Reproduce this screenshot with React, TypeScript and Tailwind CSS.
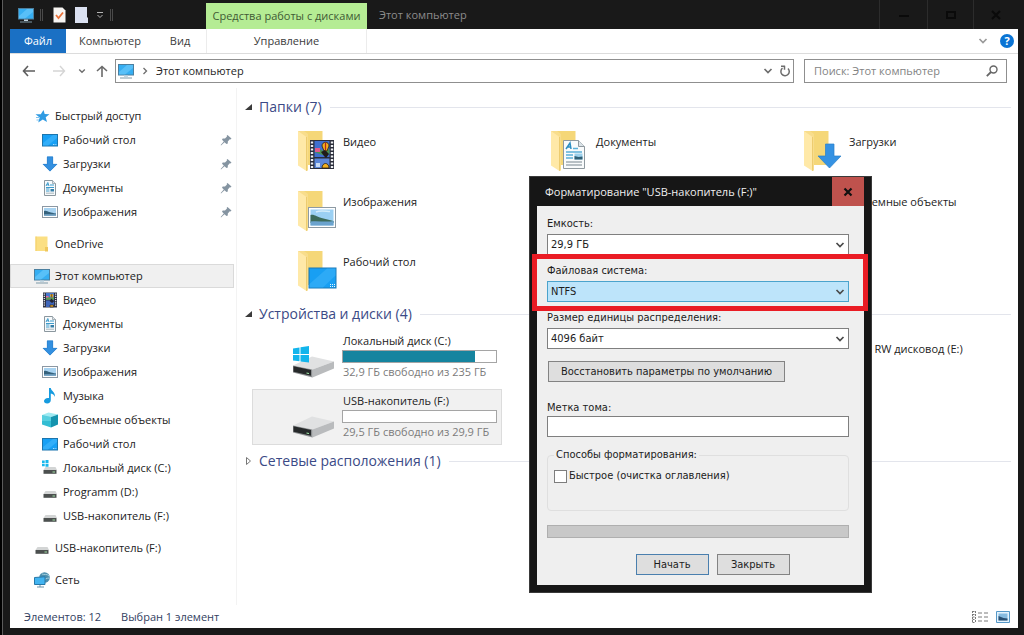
import { useState } from 'react'
import type { ReactNode } from 'react'
import clsx from 'clsx'

interface IconProps {
  className?: string
}

function MonitorIcon({ className = 'w-4 h-4' }: IconProps) {
  return (
    <svg viewBox="0 0 16 16" className={className}>
      <rect x="0.5" y="1.5" width="15" height="10.5" fill="#35aef2" stroke="#4b7f9f" />
      <path d="M1 9L9 2h6v3L7 11.500H1z" fill="#6fcbfb" opacity="0.6" />
      <path d="M6 12.500h4v1.500H6z" fill="#c3d7e2" />
      <path d="M2 15h12" stroke="#7d99a8" />
    </svg>
  )
}

function StarIcon() {
  return (
    <svg viewBox="0 0 16 16" className="w-4 h-4">
      <path d="M9.500 2l1.200 4 4.800.3-3.800 3 1.300 4.700-4.200-2.400-4.600 2.900 1.500-4.900L1.500 6.300h5.300z" fill="#2f9be3" />
      <path d="M2 9.500H5M2.500 12H5" stroke="#7cc3f0" />
    </svg>
  )
}

function DesktopIcon({ className = 'w-4 h-4' }: IconProps) {
  return (
    <svg viewBox="0 0 16 16" className={className}>
      <rect x="0.5" y="2.500" width="15" height="11.500" fill="#17a0f5" stroke="#1c75ad" />
      <path d="M1 11L11 3h4v3L6 13.500H1z" fill="#45b8fb" opacity="0.6" />
      <path d="M11 12.500h3.500" stroke="#a9dafa" strokeDasharray="1 .6" />
    </svg>
  )
}

function DownloadIcon({ className = 'w-4 h-4' }: IconProps) {
  return (
    <svg viewBox="0 0 16 16" className={className}>
      <path d="M5 .5h6v7.500h4.500L8 15.500.500 8H5z" fill="#3390e0" />
      <path d="M5.300 1h5.400v7.300h4L8 15 1.300 8.300h4z" fill="none" stroke="#2c7fc9" strokeWidth=".6" />
    </svg>
  )
}

function DocumentIcon({ className = 'w-4 h-4' }: IconProps) {
  return (
    <svg viewBox="0 0 16 16" className={className}>
      <path d="M2.500.5h8l3 3v12h-11z" fill="#f7fafc" stroke="#8b979e" />
      <path d="M10.500.5v3h3" fill="#dfe6ea" stroke="#8b979e" strokeWidth=".7" />
      <path d="M4 6l1.800-3.500L7 6M4.500 4.800h2.200M8 5h4M4 7.500h8M4 9h3.500M4 11h3.500" stroke="#3d9bcb" fill="none" />
      <path d="M4 13.200h8" stroke="#a9b5bb" />
      <path d="M8.500 9h3.500v2.500H8.500z" fill="#357fa8" />
    </svg>
  )
}

function PictureIcon({ className = 'w-4 h-4' }: IconProps) {
  return (
    <svg viewBox="0 0 16 16" className={className}>
      <rect x="0.5" y="2.500" width="15" height="11" fill="#fff" stroke="#8c98a3" />
      <rect x="2" y="4" width="12" height="8" fill="#a8d3f1" />
      <path d="M2 7c2-1 3.500.3 5.500 1S11 9 14 9.500V12H2z" fill="#35627d" />
      <path d="M2 10.500c4-.6 8 .2 12-.3V12H2z" fill="#78a7c8" />
    </svg>
  )
}

function FolderSmallIcon() {
  return (
    <svg viewBox="0 0 16 16" className="w-4 h-4">
      <path d="M1.500.500h12V15h-12z" fill="#fbdf83" />
      <path d="M11 11h3v4.500h-3z" fill="#efc75c" />
      <path d="M2 .500V15" stroke="#f3cf68" />
    </svg>
  )
}

function VideoIcon({ className = 'w-4 h-4' }: IconProps) {
  return (
    <svg viewBox="0 0 16 16" className={className}>
      <path d="M1 .500h14v15H1z" fill="#2d3143" />
      <path d="M2.300 1.500v13M13.700 1.500v13" stroke="#e4e7ed" strokeWidth="1.300" strokeDasharray="1.200 1" />
      <path d="M4 1h8v6.700H4z" fill="#4778cf" />
      <path d="M4 8.500h8V15H4z" fill="#3f66ba" />
      <path d="M4 6l2-1.500L9 6l3-1v2.700H4z" fill="#5f9c50" />
      <path d="M4 4h2.500v1.500H4z" fill="#e0669c" />
      <path d="M8 3.500C8 1.500 11.500 1.500 11.500 3.500L10.500 5.500h-1.500z" fill="#edab24" />
      <path d="M9.700 2v3.500M8 13h3.500v2H8z" stroke="#1e1a18" strokeWidth=".6" fill="#edab24" />
      <path d="M7.500 9l2-2.500L12 9.500 10 11z" fill="#222333" />
    </svg>
  )
}

function MusicIcon() {
  return (
    <svg viewBox="0 0 16 16" className="w-4 h-4">
      <path d="M7 0h1.800c.2 3 4.700 4 4.200 9-.6-2-1.900-3-4.200-3.500V12c0 2-1.500 3.500-3.600 3.500C3 15.500 2 14.500 2 13c0-2 2.300-3.500 5-3z" fill="#169bdf" />
    </svg>
  )
}

function CubeIcon() {
  return (
    <svg viewBox="0 0 16 16" className="w-4 h-4">
      <path d="M0 3l6.500-2.500L16 2.500 9 5z" fill="#9feaf2" />
      <path d="M0 3l9 2v10.500L0 12.500z" fill="#33bdd3" />
      <path d="M9 5l7-2.500v10L9 15.500z" fill="#1493ae" />
      <path d="M0 3l9 2v4L0 9z" fill="#66d7e4" opacity=".7" />
    </svg>
  )
}

function DriveSmallIcon({ system = false }: { system?: boolean }) {
  return (
    <svg viewBox="0 0 16 16" className="w-4 h-4">
      {system && <path d="M0 .500h2.700v2.500H0zM3.500 0h3v3h-3zM0 3.800h2.700v2.500H0zM3.500 3.800h3v3h-3z" fill="#16b7ec" />}
      <path d="M3.500 7h10l1.500 3H1.500z" fill="#d3d5d5" />
      <path d="M1.500 10H14.500v3.800H1.500z" fill="#4c504f" />
      <path d="M10.500 12h2.500" stroke="#9fe0a5" />
    </svg>
  )
}

function NetworkIcon() {
  return (
    <svg viewBox="0 0 16 16" className="w-4 h-4">
      <circle cx="10.500" cy="5.500" r="5.300" fill="#4d8fae" />
      <path d="M8 2c2 1 5-.5 7 2M9 10c1-3 4-4 6.500-4" stroke="#a4cfdd" fill="none" />
      <path d="M.5 5.500l10.500-.7v7.700H.500z" fill="#42b4f1" stroke="#2778a8" />
      <path d="M3 15h7M6 13v2" stroke="#6c93a9" />
    </svg>
  )
}

function PinIcon() {
  return (
    <svg viewBox="0 0 12 12" className="w-3 h-3">
      <path d="M7.500 1L11.500 4.500 10.500 5.500 9.800 5.300 7.800 7.500 7.800 9.500 6.500 10 4.500 8.200 1 11.500 .7 11 3.800 7.500 2 5.700 2.700 4.500 5 4.500 7 2.500 6.700 1.700z" fill="#8594a1" />
    </svg>
  )
}

function FolderBase() {
  return (
    <>
      <path d="M8 1h18.500v34H8z" fill="#f5d778" />
      <path d="M2 1h6l4 3v37l-6-5-4-1z" fill="#f8dd8c" />
      <path d="M2 1l8.500 6v34L2 35.500z" fill="#ffe9a8" />
      <path d="M10.500 7v34" stroke="#e9c766" strokeWidth=".8" />
    </>
  )
}

function FolderIcon({ children }: { children?: ReactNode }) {
  return (
    <svg viewBox="0 0 42 42" className="w-[42px] h-[42px]">
      <FolderBase />
      {children}
    </svg>
  )
}

function VideoFolder() {
  return (
    <FolderIcon>
      <rect x="14" y="10" width="24" height="29" fill="#2a2d3a" />
      <path d="M16 11.500v27M36 11.500v27" stroke="#eef0f3" strokeWidth="2.400" strokeDasharray="2 1.500" />
      <path d="M18.500 11h15v16h-15z" fill="#3f6fcf" />
      <path d="M18.500 28.500h15V38h-15z" fill="#5b86d8" />
      <path d="M18.500 22l5-3 4 2 6-2v5l-7 1z" fill="#4b9150" />
      <path d="M19 18h5v4h-5z" fill="#df5a8d" />
      <path d="M26 16c0-5 7-5 7 0l-2 5h-3z" fill="#f2b01f" stroke="#2b1d0e" strokeWidth=".8" />
      <path d="M29.500 12.500v8" stroke="#b3271d" strokeWidth="1.200" />
      <path d="M25 22l4-2 4 4-3 4-2-2z" fill="#1f1c1a" />
      <path d="M26 38c0-6 7-6 7 0z" fill="#f2b01f" stroke="#2b1d0e" strokeWidth=".8" />
      <path d="M20 33h4v4h-4z" fill="#c7daf5" />
    </FolderIcon>
  )
}

function PictureFolder() {
  return (
    <FolderIcon>
      <rect x="12.500" y="17.500" width="27" height="20" fill="#fff" stroke="#8d9aa3" />
      <rect x="14.500" y="19.500" width="23" height="16" fill="#9bd0f3" />
      <path d="M14.500 25c4-1 6 2 11 3l12 3v2h-23z" fill="#3c6b5a" />
      <path d="M14.500 31.500c8-1 15 1 23-.5v4.500h-23z" fill="#6ba3ce" />
      <path d="M20 22c4-2 8-1 14-.5" stroke="#d5edfb" strokeWidth="1.500" fill="none" />
    </FolderIcon>
  )
}

function DesktopFolder() {
  return (
    <FolderIcon>
      <rect x="13" y="18" width="27" height="20" fill="#189ff3" stroke="#1b79b5" />
      <path d="M13.500 34L31 18.500h8.500v7L27 37.500H13.500z" fill="#42b6fa" opacity=".5" />
      <path d="M34 36.500h5M34 34.500h5" stroke="#e6f6ff" strokeDasharray="1 1" />
    </FolderIcon>
  )
}

function DocumentFolder() {
  return (
    <FolderIcon>
      <path d="M14.500 10.500h15l6 6v22h-21z" fill="#f9fbfc" stroke="#8f999f" />
      <path d="M29.500 10.500v6h6" fill="#dbe3e8" stroke="#8f999f" />
      <path d="M17 19l4-6 1 6M18.500 17h3.500" stroke="#2d8ec2" strokeWidth="1.500" fill="none" />
      <path d="M24 18.500h5M17 22h16M17 25h7M17 28h7" stroke="#5bb0d8" strokeWidth="1.300" />
      <path d="M17 32h16M17 35h16" stroke="#a3adb3" strokeWidth="1.300" />
      <path d="M25.500 23.500h8v6h-8z" fill="#9cd0ec" />
      <path d="M25.500 26l4 1 4-.5v3h-8z" fill="#2f6076" />
    </FolderIcon>
  )
}

function DownloadFolder() {
  return (
    <FolderIcon>
      <path d="M23.500 14h8.500v12h7L27.500 38 16 26h7.500z" fill="#3592e3" stroke="#2a7fc9" strokeWidth=".7" />
    </FolderIcon>
  )
}

function DriveIcon({ system = false }: { system?: boolean }) {
  return (
    <svg viewBox="0 0 44 34" className="w-[44px] h-[34px]">
      <path d="M1 20.500L20 11.500l22 5-21.500 8z" fill="#e0e1e2" />
      <path d="M20.500 24.500L42 16.500v7L20.500 32.500z" fill="#b9bbbd" />
      <path d="M1 20.500l19.500 4v8L1 27.500z" fill="#8c8f91" />
      <path d="M1.500 21.300l17.500 3.800v5.700L1.500 26.800z" fill="#26292a" />
      <path d="M14.500 27.500l2.500.5v1l-2.500-.5z" fill="#a6f3ae" />
      {system && <path d="M1 3.500l6.500-1V9H1zM8.500 2.300L17 1v8H8.500zM1 10h6.500v6.300L1 15.500zM8.500 10H17v7.500l-8.500-1z" fill="#13b5ec" />}
    </svg>
  )
}

function Chevron({ className }: IconProps) {
  return (
    <svg viewBox="0 0 10 10" className={className} fill="none" stroke="currentColor">
      <path d="M1.500 3L5 6.500 8.500 3" strokeWidth="1.700" />
    </svg>
  )
}

interface TreeItem {
  label: string
  icon: ReactNode
  nested?: boolean
  pinned?: boolean
  selected?: boolean
}

const TREE: TreeItem[][] = [
  [
    { label: 'Быстрый доступ', icon: <StarIcon /> },
    { label: 'Рабочий стол', icon: <DesktopIcon />, nested: true, pinned: true },
    { label: 'Загрузки', icon: <DownloadIcon />, nested: true, pinned: true },
    { label: 'Документы', icon: <DocumentIcon />, nested: true, pinned: true },
    { label: 'Изображения', icon: <PictureIcon />, nested: true, pinned: true },
  ],
  [{ label: 'OneDrive', icon: <FolderSmallIcon /> }],
  [
    { label: 'Этот компьютер', icon: <MonitorIcon />, selected: true },
    { label: 'Видео', icon: <VideoIcon />, nested: true },
    { label: 'Документы', icon: <DocumentIcon />, nested: true },
    { label: 'Загрузки', icon: <DownloadIcon />, nested: true },
    { label: 'Изображения', icon: <PictureIcon />, nested: true },
    { label: 'Музыка', icon: <MusicIcon />, nested: true },
    { label: 'Объемные объекты', icon: <CubeIcon />, nested: true },
    { label: 'Рабочий стол', icon: <DesktopIcon />, nested: true },
    { label: 'Локальный диск (C:)', icon: <DriveSmallIcon system />, nested: true },
    { label: 'Programm (D:)', icon: <DriveSmallIcon />, nested: true },
    { label: 'USB-накопитель (F:)', icon: <DriveSmallIcon />, nested: true },
  ],
  [{ label: 'USB-накопитель (F:)', icon: <DriveSmallIcon /> }],
  [{ label: 'Сеть', icon: <NetworkIcon /> }],
]

function TitleBar() {
  return (
    <header className="flex h-[29px] text-[#8c8c8c]">
      <div className="flex w-[196px] items-center pl-2">
        <MonitorIcon />
        <span className="ml-1.5 h-3 w-[3px] border-x border-[#4a4a4a]" />
        <svg viewBox="0 0 13 16" className="ml-2.5 h-4 w-[13px]">
          <path d="M.5.500h9l3 3v12H.500z" fill="#f7f5f3" />
          <path d="M3 8l2.500 3L10 5.500" fill="none" stroke="#e8713a" strokeWidth="1.800" />
        </svg>
        <svg viewBox="0 0 13 16" className="ml-[9px] h-4 w-[13px]">
          <path d="M0 0h12v10l1 1v5H0z" fill="#dbe1f1" />
        </svg>
        <svg viewBox="0 0 8 8" className="ml-2 h-2 w-2" fill="none" stroke="#b5b5b5">
          <path d="M1 1.500h6M1.500 4L4 6.500 6.500 4" />
        </svg>
        <span className="ml-1.5 h-3 w-[3px] border-x border-[#4a4a4a]" />
      </div>
      <div className="mt-[3px] flex w-[161px] items-center justify-center bg-[#b5ec94] whitespace-nowrap text-[#3f5a35]">
        Средства работы с дисками
      </div>
      <h1 className="ml-3 self-center">Этот компьютер</h1>
      <div className="ml-auto flex text-[#0a0a0a]">
        <button aria-label="Свернуть" className="flex w-12 items-center justify-center border-l border-[#2c2c2c]">
          <svg viewBox="0 0 12 12" className="h-3 w-3"><path d="M1 7h10" stroke="currentColor" strokeWidth="2" /></svg>
        </button>
        <button aria-label="Развернуть" className="flex w-[46px] items-center justify-center border-l border-[#2c2c2c]">
          <svg viewBox="0 0 12 12" className="h-3 w-3"><path d="M2 3h8v6H2z" stroke="currentColor" strokeWidth="2" fill="none" /></svg>
        </button>
        <button aria-label="Закрыть окно" className="flex w-[45px] items-center justify-center border-l border-[#2c2c2c]">
          <svg viewBox="0 0 12 12" className="h-3 w-3"><path d="M2 2l8 8M10 2l-8 8" stroke="currentColor" strokeWidth="2" /></svg>
        </button>
      </div>
    </header>
  )
}

function RibbonTabs() {
  return (
    <nav className="flex h-[25px] border-b border-[#dcdcdc] bg-white text-[#3c3c3c]">
      <button className="w-14 bg-[#1a70c4] text-white">Файл</button>
      <button className="w-[88px]">Компьютер</button>
      <button className="w-[52px]">Вид</button>
      <button className="w-[161px] border-x border-[#ececec]">Управление</button>
      <div className="ml-auto flex items-center gap-3 pr-1 text-[#9a9a9a]">
        <Chevron className="h-2.5 w-2.5" />
        <button aria-label="Справка" className="h-3.5 w-3.5 rounded-full bg-[#0a74d4] leading-[14px] font-bold text-white">?</button>
      </div>
    </nav>
  )
}

function AddressRow() {
  return (
    <div className="flex h-[34px] items-center bg-white pr-[11px] text-[#6d6d6d]">
      <div className="flex w-[105px] items-center pl-3">
        <button aria-label="Назад">
          <svg viewBox="0 0 14 12" className="h-3 w-3.5" fill="none" stroke="#5e5e5e" strokeWidth="1.600"><path d="M6 1L1.500 6 6 11M1.500 6H13" /></svg>
        </button>
        <button aria-label="Вперед" className="ml-4">
          <svg viewBox="0 0 14 12" className="h-3 w-3.5" fill="none" stroke="#d5d5d5" strokeWidth="1.400"><path d="M8 1l4.500 5L8 11M12.500 6H1" /></svg>
        </button>
        <button aria-label="Последние расположения" className="ml-3">
          <Chevron className="h-2 w-2" />
        </button>
        <button aria-label="Вверх" className="ml-2.5">
          <svg viewBox="0 0 12 12" className="h-3 w-3" fill="none" stroke="#6a6a6a" strokeWidth="1.600"><path d="M1 6l5-4.500L11 6M6 1.500V12" /></svg>
        </button>
      </div>
      <div className="flex h-6 flex-1 items-center border border-[#8f8f8f] px-0.5">
        <MonitorIcon />
        <svg viewBox="0 0 6 8" className="ml-2 h-2 w-1.5" fill="none" stroke="#6d6d6d" strokeWidth="1.300"><path d="M1.500 1l3 3-3 3" /></svg>
        <span className="ml-2 text-[#262626]">Этот компьютер</span>
        <button aria-label="Показать журнал" className="ml-auto">
          <Chevron className="h-2.5 w-2.5" />
        </button>
        <button aria-label="Обновить" className="ml-1.5">
          <svg viewBox="0 0 12 12" className="h-3 w-3" fill="none" stroke="currentColor" strokeWidth="1.500">
            <path d="M3.500 3.200A4.200 4.200 0 1 0 9 3.500M2 1.300h4M5.500 .8v4" />
          </svg>
        </button>
      </div>
      <form className="ml-2.5 flex h-6 w-[203px] items-center border border-[#8f8f8f] pr-2 pl-[9px]">
        <input aria-label="Поиск" placeholder="Поиск: Этот компьютер" className="min-w-0 flex-1 outline-none placeholder:text-[#838383]" />
        <svg viewBox="0 0 12 12" className="h-3 w-3" fill="none" stroke="#666" strokeWidth="1.400">
          <circle cx="7.500" cy="4.500" r="3.500" />
          <path d="M5 7L.8 11.200" strokeWidth="1.800" />
        </svg>
      </form>
    </div>
  )
}

function Sidebar() {
  return (
    <aside className="flex w-[227px] flex-col gap-2 border-r border-[#f3f3f3] pt-4 pr-0.5">
      {TREE.map((group, i) => (
        <ul key={i}>
          {group.map((item) => (
            <li key={item.label}>
              <a
                href="#"
                className={clsx(
                  'flex h-6 items-center gap-[5px] border pr-px',
                  item.nested ? 'pl-[31px]' : 'pl-[23px]',
                  item.selected ? 'border-[#dadada] bg-[#f0f0f0]' : 'border-transparent'
                )}
              >
                {item.icon}
                <span className="flex-1">{item.label}</span>
                {item.pinned && <PinIcon />}
              </a>
            </li>
          ))}
        </ul>
      ))}
    </aside>
  )
}

function SectionHeading({ open = true, children }: { open?: boolean; children: ReactNode }) {
  return (
    <h2 className="-ml-2 flex h-[18px] items-center text-[14px] leading-4 text-[#3b4a86]">
      <svg viewBox="0 0 8 8" className="mr-[7px] h-2 w-2">
        {open ? <path d="M8 1v6H1z" fill="#3b3b3b" /> : <path d="M2.500 .5L6.500 4l-4 3.500z" fill="none" stroke="#777" />}
      </svg>
      {children}
      <span className="ml-2 h-px flex-1 bg-[#e3e5ec]" />
    </h2>
  )
}

function TileGrid({ children }: { children: ReactNode }) {
  return <div className="mt-1.5 mr-[3px] mb-[7px] grid grid-cols-3 gap-x-[3px] gap-y-1">{children}</div>
}

function FolderTile({ icon, label }: { icon: ReactNode; label: string }) {
  return (
    <div className="flex h-14 pl-11">
      <div className="mt-2 w-[47px]">{icon}</div>
      <span className="mt-3">{label}</span>
    </div>
  )
}

interface DriveTileProps {
  label: string
  info: string
  used: number
  system?: boolean
  selected?: boolean
}

function DriveTile({ label, info, used, system, selected }: DriveTileProps) {
  return (
    <div className={clsx('flex h-14 border pl-[39px]', selected ? 'border-[#dcdcdc] bg-[#f1f1f1]' : 'border-transparent')}>
      <div className="mt-[15px] w-[51px]"><DriveIcon system={system} /></div>
      <div className="whitespace-nowrap">
        <div className="mt-[3px]">{label}</div>
        <div className="-ml-px mt-px h-[13px] w-[155px] border border-[#a5a5a5] bg-white">
          <div className="h-full bg-[#15849f]" style={{ width: `${used}%` }} />
        </div>
        <div className="mt-px text-[#7b7b7b]">{info}</div>
      </div>
    </div>
  )
}

function Content() {
  return (
    <main className="flex-1 pt-2.5 pr-[7px] pl-[15px]">
      <SectionHeading>Папки (7)</SectionHeading>
      <TileGrid>
        <FolderTile icon={<VideoFolder />} label="Видео" />
        <FolderTile icon={<DocumentFolder />} label="Документы" />
        <FolderTile icon={<DownloadFolder />} label="Загрузки" />
        <FolderTile icon={<PictureFolder />} label="Изображения" />
        <FolderTile icon={<FolderIcon />} label="" />
        <FolderTile icon={<FolderIcon />} label="Объемные объекты" />
        <FolderTile icon={<DesktopFolder />} label="Рабочий стол" />
      </TileGrid>
      <SectionHeading>Устройства и диски (4)</SectionHeading>
      <TileGrid>
        <DriveTile label="Локальный диск (C:)" info="32,9 ГБ свободно из 235 ГБ" used={86} system />
        <FolderTile icon={<DriveIcon />} label="" />
        <FolderTile icon={<DriveIcon />} label="DVD RW дисковод (E:)" />
        <DriveTile label="USB-накопитель (F:)" info="29,5 ГБ свободно из 29,9 ГБ" used={0} selected />
      </TileGrid>
      <SectionHeading open={false}>Сетевые расположения (1)</SectionHeading>
    </main>
  )
}

function StatusBar() {
  return (
    <footer className="flex h-[23px] items-center bg-white pr-2 pl-3.5 text-[#33415f]">
      <span>Элементов: 12</span>
      <span className="ml-5">Выбран 1 элемент</span>
      <div className="ml-auto flex items-center gap-2">
        <button aria-label="Таблица">
          <svg viewBox="0 0 16 12" className="h-3 w-4" fill="none" stroke="#7a7a7a">
            <path d="M.5 0v12M3.500 0v12M.5 .5h3M.5 3.500h3M.5 6h3M.5 8.500h3M.5 11.500h3" strokeDasharray="2 1" />
            <path d="M6 2h10M6 6h10M6 10h10" strokeDasharray="4 2" />
          </svg>
        </button>
        <button aria-label="Крупные значки">
          <svg viewBox="0 0 14 12" className="h-3 w-3.5">
            <path d="M.5.500h13v11H.500z" fill="#e4f3fd" stroke="#5598c8" />
            <path d="M2.500 2.500h9v7h-9z" fill="#86bbe0" />
            <path d="M2.500 5l5 2 4 .5v2h-9z" fill="#294f72" />
          </svg>
        </button>
      </div>
    </footer>
  )
}

interface SelectFieldProps {
  id: string
  label: string
  value: string
  highlighted?: boolean
}

function SelectField({ id, label, value, highlighted }: SelectFieldProps) {
  return (
    <div className="mb-2">
      <label htmlFor={id} className="block h-[18px]">{label}</label>
      <div className="relative">
        <select
          id={id}
          className={clsx(
            'block h-[21px] w-full appearance-none border px-[3px] outline-none',
            highlighted ? 'border-[#4ba3cc] bg-[#bde4fa]' : 'border-[#7f7f7f] bg-white'
          )}
        >
          <option>{value}</option>
        </select>
        <Chevron className="pointer-events-none absolute top-1.5 right-1 h-2.5 w-2.5 text-[#4a4a4a]" />
      </div>
    </div>
  )
}

function FormatDialog() {
  const [quick, setQuick] = useState(false)
  const [volume, setVolume] = useState('')

  return (
    <div
      role="dialog"
      aria-labelledby="format-title"
      className="absolute top-44 left-[529px] w-[343px] border border-[#3a3a3a] bg-[#161616] px-[7px] pb-[7px]"
    >
      <div className="flex h-[29px] items-center">
        <h2 id="format-title" className="flex-1 pl-2 text-[#f0f0f0]">Форматирование "USB-накопитель (F:)"</h2>
        <button aria-label="Закрыть диалог" className="flex h-[29px] w-8 items-center justify-center bg-[#bf524d]">
          <svg viewBox="0 0 10 10" className="h-2.5 w-2.5"><path d="M1.500 1.500l7 7M8.500 1.500l-7 7" stroke="#111" strokeWidth="2.200" /></svg>
        </button>
      </div>
      <div className="bg-[#efefef] pt-2.5 pr-[15px] pb-2.5 pl-2.5 font-['DejaVu_Sans_Condensed','DejaVu_Sans',sans-serif] text-[#1c1c1c]">
        <SelectField id="capacity" label="Емкость:" value="29,9 ГБ" />
        <SelectField id="filesystem" label="Файловая система:" value="NTFS" highlighted />
        <SelectField id="unit" label="Размер единицы распределения:" value="4096 байт" />
        <button className="mt-1 ml-px h-[21px] w-[237px] border border-[#838383] bg-[#dedede]">
          Восстановить параметры по умолчанию
        </button>
        <label htmlFor="volume" className="mt-[18px] block h-4">Метка тома:</label>
        <input
          id="volume"
          value={volume}
          onChange={(e) => setVolume(e.target.value)}
          className="block h-[21px] w-full border border-[#7f7f7f] bg-white px-1 outline-none"
        />
        <fieldset className="mt-2.5 h-16 rounded-sm border border-[#dfdfdf] px-1.5">
          <legend className="px-0.5">Способы форматирования:</legend>
          <label className="mt-[5px] flex items-center gap-0.5">
            <input
              type="checkbox"
              checked={quick}
              onChange={(e) => setQuick(e.target.checked)}
              className="h-[13px] w-[13px] appearance-none border border-[#7d7d7d] bg-white checked:bg-[#2b6fb0]"
            />
            Быстрое (очистка оглавления)
          </label>
        </fieldset>
        <div role="progressbar" aria-label="Ход форматирования" className="mt-3.5 h-[13px] border border-[#afafaf] bg-[#c8c8c8]" />
        <div className="mt-4 flex justify-center gap-2 pl-[29px]">
          <button className="h-[21px] w-[73px] border border-[#4a7fae] bg-[#dedede]">Начать</button>
          <button className="h-[21px] w-[73px] border border-[#838383] bg-[#dedede]">Закрыть</button>
        </div>
      </div>
      {/* red frame around the file system field */}
      <div className="pointer-events-none absolute top-[77px] left-0.5 h-[57px] w-[336px] border-5 border-[#ea1c24]" />
    </div>
  )
}

export default function App() {
  return (
    <div className="relative flex min-h-screen flex-col bg-[#191919] pr-1.5 pb-[7px] pl-2 font-['Open_Sans','Noto_Sans',sans-serif] text-[11px] leading-4 text-[#222]">
      <div className="absolute inset-y-0 left-0 w-[3px] border-r border-[#5c5c5c] bg-black" />
      <div className="flex flex-1 flex-col pl-0.5">
        <TitleBar />
        <RibbonTabs />
        <AddressRow />
        <div className="flex flex-1 bg-white">
          <Sidebar />
          <Content />
        </div>
        <StatusBar />
      </div>
      <FormatDialog />
    </div>
  )
}
